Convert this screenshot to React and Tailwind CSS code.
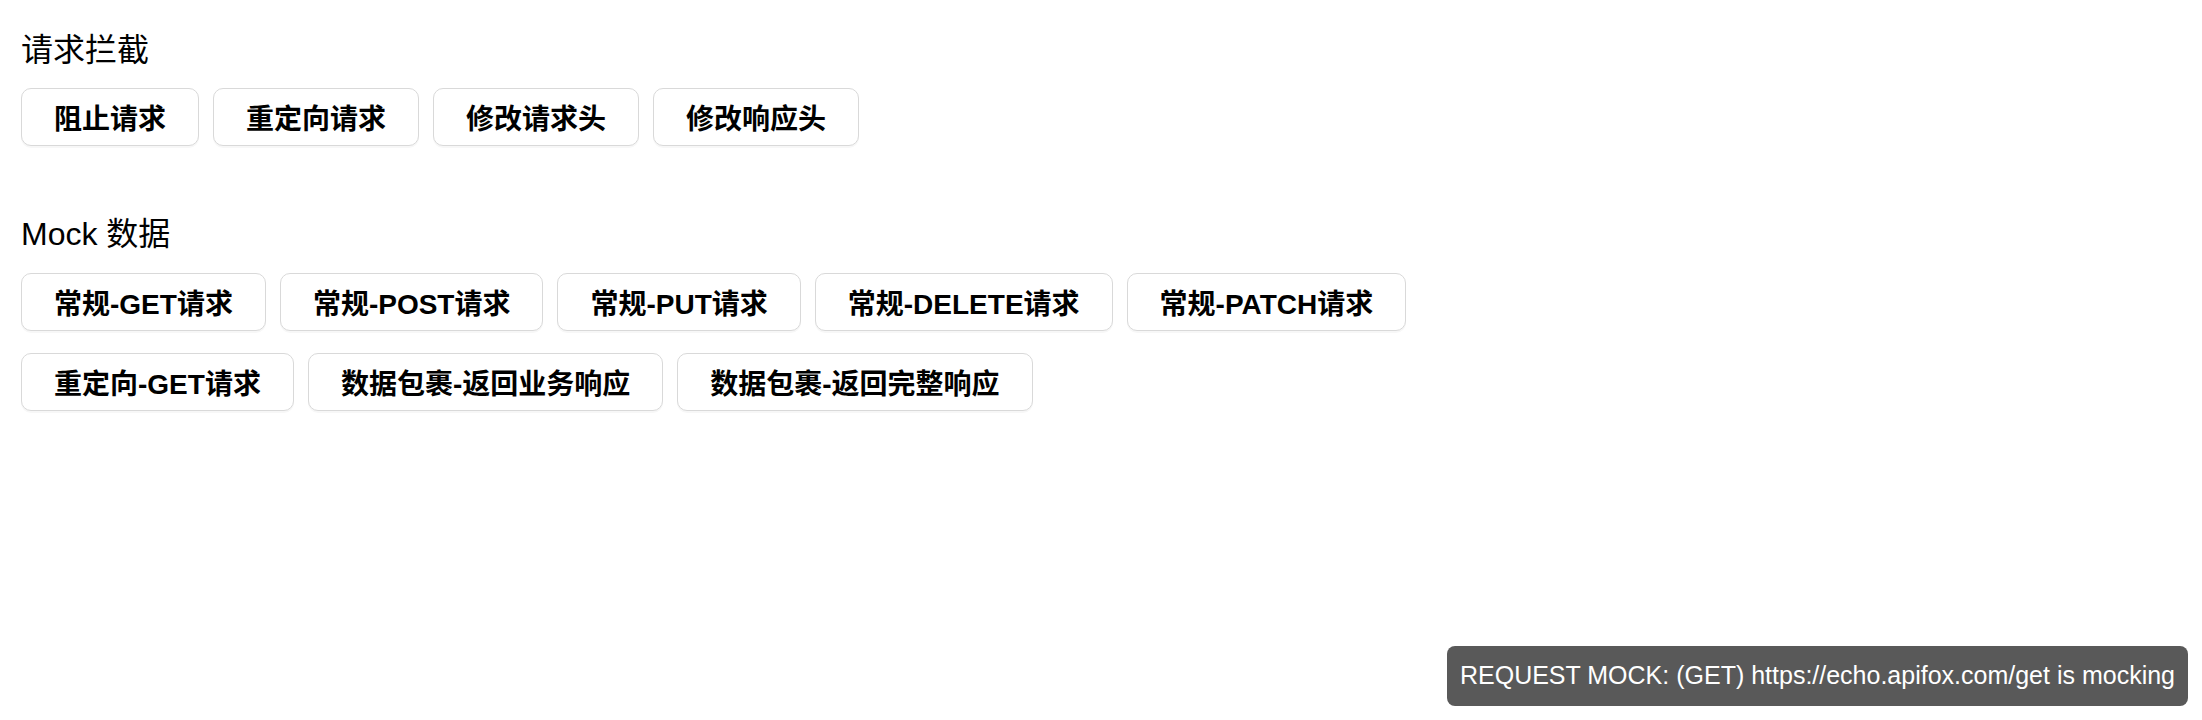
import React from "react";

const font = { fontFamily: '"Liberation Sans", "Noto Sans CJK SC", sans-serif' };

function Btn({ children }) {
  return (
    <button className="h-[58px] px-[32px] pt-[5px] border border-[#d9d9d9] rounded-[10px] bg-white text-[28px] font-semibold text-black leading-none shadow-[0_2px_0_rgba(0,0,0,0.03)] whitespace-nowrap">
      {children}
    </button>
  );
}

export default function App() {
  const row1 = ["阻止请求", "重定向请求", "修改请求头", "修改响应头"];
  const row2 = [
    "常规-GET请求",
    "常规-POST请求",
    "常规-PUT请求",
    "常规-DELETE请求",
    "常规-PATCH请求",
  ];
  const row3 = ["重定向-GET请求", "数据包裹-返回业务响应", "数据包裹-返回完整响应"];
  return (
    <div style={font} className="min-h-[720px] bg-white px-[21px] pt-[28px] text-black">
      <h2 className="text-[32px] leading-[44px] font-normal mb-[16px]">请求拦截</h2>
      <div className="flex flex-wrap gap-x-[14px] gap-y-[22px]">
        {row1.map((t) => (
          <Btn key={t}>{t}</Btn>
        ))}
      </div>
      <h2 className="mt-[66px] text-[32px] leading-[44px] font-normal mb-[17px]">Mock 数据</h2>
      <div className="flex flex-col gap-y-[22px]">
        <div className="flex flex-wrap gap-x-[14px]">
          {row2.map((t) => (
            <Btn key={t}>{t}</Btn>
          ))}
        </div>
        <div className="flex flex-wrap gap-x-[14px]">
          {row3.map((t) => (
            <Btn key={t}>{t}</Btn>
          ))}
        </div>
      </div>
      <div className="fixed bottom-[14px] right-[14px] h-[60px] flex items-center px-[13px] bg-[#595959] rounded-[8px] text-white text-[25px] whitespace-nowrap">
        REQUEST MOCK: (GET) https://echo.apifox.com/get is mocking
      </div>
    </div>
  );
}
